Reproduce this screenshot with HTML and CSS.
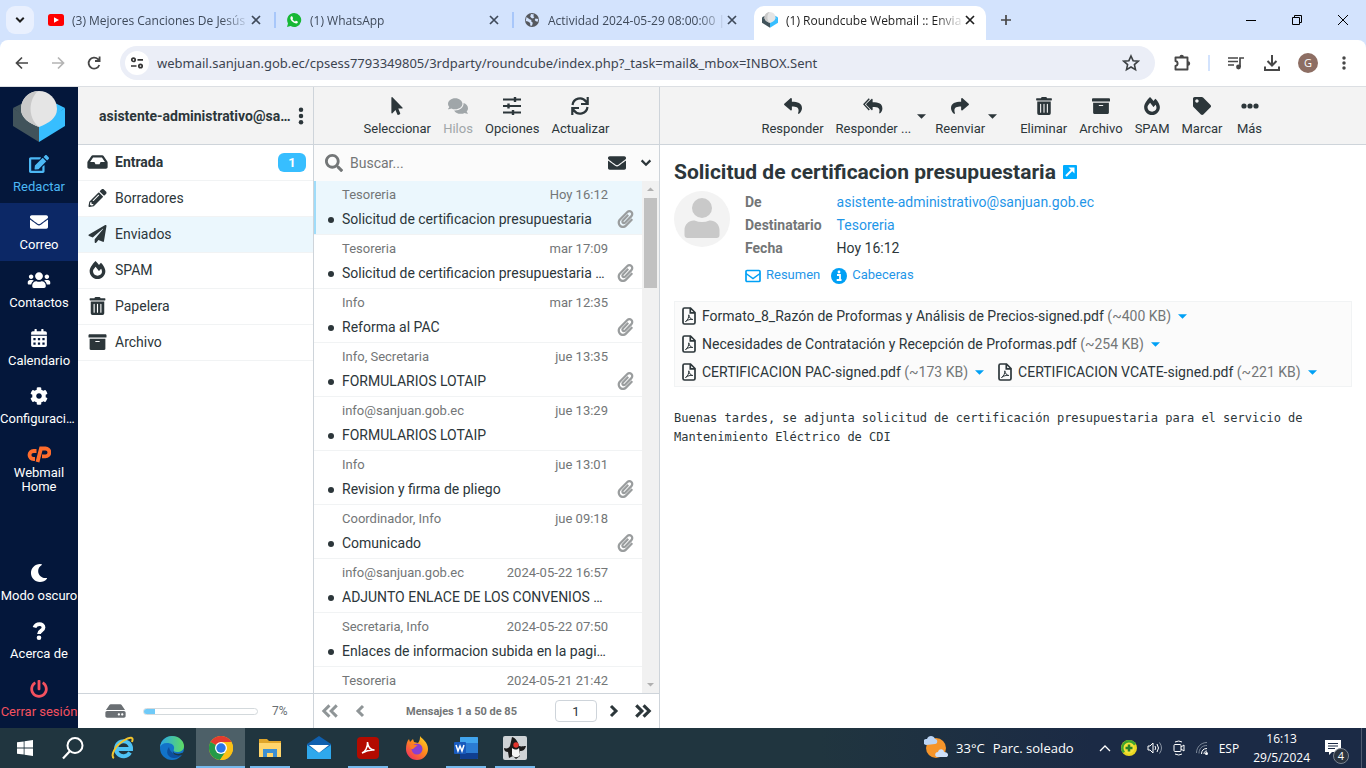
FILE: index.html
```html
<!DOCTYPE html>
<html lang="es">
  <head>
    <meta charset="utf-8">
    <title>(1) Roundcube Webmail :: Enviados</title>
    <link rel="stylesheet" href="styles.css">
  </head>
  <body>
    <svg class="sprite" aria-hidden="true">
      <symbol id="cube" viewBox="0 0 52 52">
        <path fill="#41535b" d="M0 17v18l26 16V33z"/>
        <path fill="#37beff" d="M52 17v18L26 51V33z"/>
        <path fill="#41535b" d="M0 17l10-5 16 24z"/>
        <path fill="#37beff" d="M52 17l-10-5-16 24z"/>
        <path fill="#e5e5e5" d="M26 0a18 18 0 0 1 18 18c0 9-8 14-18 18C16 32 8 27 8 18A18 18 0 0 1 26 0z"/>
        <path fill="#c9c9c9" d="M25 0C13 1 8 10 8 18c0 9 8 14 18 18-12-10-10-28-1-36z"/>
      </symbol>
      <symbol id="chev-down" viewBox="0 0 16 16"><path d="M3 5l5 5 5-5" fill="none" stroke="currentColor" stroke-width="2.6"/></symbol>
      <symbol id="close" viewBox="0 0 16 16"><path d="M4 4l8 8M12 4l-8 8" fill="none" stroke="currentColor" stroke-width="1.7"/></symbol>
      <symbol id="caret" viewBox="0 0 10 6"><path d="M0 1h10L5 6z" fill="currentColor"/></symbol>
      <symbol id="youtube" viewBox="0 0 16 16"><rect y="2" width="16" height="12" rx="2.5" fill="#f00"/><path d="M6 5.200l5 2.800-5 2.800z" fill="#fff"/></symbol>
      <symbol id="whatsapp" viewBox="0 0 16 16"><path d="M8 1a7 7 0 1 1-3.400 13L1 15l1-3.600A7 7 0 0 1 8 1z" fill="#17b835"/><path d="M5.300 4.200c-1.800 1.300-.6 4 1.300 5.600 2 1.700 4.300 2.500 5.200.8.400-.8.100-1-1.700-1.800-.7-.2-.7 1-1.400.7C7.700 9 6.900 8.200 6.500 7.300c-.1-.5.700-.6.500-1.300-.6-1.600-.7-2-1.700-1.800z" fill="#fff"/></symbol>
      <symbol id="globe" viewBox="0 0 16 16"><circle cx="8" cy="8" r="7" fill="#55585e"/><path d="M2.500 5l3 2.300 1.800.7v1.600l1.500 1.200-.8 3-1.800-.3V11L4 9.500 1.800 9zM7 2l3 .6-.8 1.700L10.500 5 9 6.500 7.500 6 6.200 4.600zM11.500 6.500l2.700.6-.5 2.600-1.800-.4-1.200-1.300z" fill="#d3e3fd"/></symbol>
      <symbol id="back" viewBox="0 0 16 16"><path d="M14 8H3M8 2.500L2.500 8 8 13.500" fill="none" stroke="currentColor" stroke-width="1.700"/></symbol>
      <symbol id="forward" viewBox="0 0 16 16"><path d="M2 8h11M8 2.500L13.500 8 8 13.500" fill="none" stroke="currentColor" stroke-width="1.700"/></symbol>
      <symbol id="reload" viewBox="0 0 16 16"><path d="M13.300 10A5.500 5.500 0 1 1 12 4.200L13.500 6M13.600 1.500V6H9" fill="none" stroke="currentColor" stroke-width="1.800"/></symbol>
      <symbol id="tune" viewBox="0 0 16 16"><g fill="none" stroke="#333" stroke-width="1.700"><circle cx="4.500" cy="4.800" r="1.700"/><path d="M8.500 4.800H14M2 11h5.500"/><circle cx="11.500" cy="11" r="1.700"/></g></symbol>
      <symbol id="star" viewBox="0 0 18 18"><path d="M9 2l2.100 4.700 5.100.5-3.800 3.400 1.100 5L9 13l-4.500 2.600 1.100-5L1.800 7.200l5.100-.5z" fill="none" stroke="#3c4043" stroke-width="1.600"/></symbol>
      <symbol id="puzzle" viewBox="0 0 18 18"><path d="M2.500 3.500h12v12h-12V12c2.800-.5 2.800-4.500 0-5z" fill="none" stroke="#474747" stroke-width="1.900" stroke-linejoin="round"/><path d="M6.500 3a2.200 2.200 0 0 1 4.400 0zM15 7.300a2.200 2.200 0 0 1 0 4.400z" fill="#474747"/></symbol>
      <symbol id="playlist" viewBox="0 0 18 18"><g fill="none" stroke="#474747" stroke-width="1.700"><path d="M1 4h10M1 7.500h10M1 11h6M13 13V4h4"/></g><circle cx="11.500" cy="13" r="2.400" fill="#474747"/></symbol>
      <symbol id="download" viewBox="0 0 18 18"><path d="M9 1v10M4.500 7L9 11.500 13.500 7M2 12.500V16h14v-3.500" fill="none" stroke="#474747" stroke-width="2"/></symbol>
      <symbol id="dots-v" viewBox="0 0 6 20"><circle cx="3" cy="3" r="2.500"/><circle cx="3" cy="10" r="2.500"/><circle cx="3" cy="17" r="2.500"/></symbol>
      <symbol id="dots-h" viewBox="0 0 18 18"><circle cx="3" cy="9" r="2.600"/><circle cx="9" cy="9" r="2.600"/><circle cx="15" cy="9" r="2.600"/></symbol>
      <symbol id="edit" viewBox="0 0 576 512"><path d="M402.600 83.200l90.200 90.200c3.800 3.800 3.800 10 0 13.800L274.400 405.600l-92.800 10.300c-12.400 1.400-22.900-9.100-21.500-21.500l10.300-92.800L388.800 83.200c3.800-3.800 10-3.800 13.800 0zm162-22.900l-48.800-48.800c-15.200-15.200-39.900-15.200-55.200 0l-35.400 35.400c-3.800 3.800-3.800 10 0 13.800l90.200 90.200c3.800 3.800 10 3.800 13.800 0l35.400-35.400c15.200-15.300 15.200-40 0-55.200zM384 346.200V448H64V128h229.800c3.200 0 6.200-1.300 8.500-3.500l40-40c7.600-7.600 2.200-20.500-8.500-20.500H48C21.500 64 0 85.500 0 112v352c0 26.500 21.500 48 48 48h352c26.500 0 48-21.500 48-48V306.200c0-10.700-12.900-16-20.500-8.500l-40 40c-2.200 2.300-3.500 5.300-3.500 8.500z"/></symbol>
      <symbol id="envelope" viewBox="0 0 512 512"><path d="M502.300 190.800c3.900-3.100 9.700-.2 9.700 4.700V400c0 26.500-21.500 48-48 48H48c-26.500 0-48-21.500-48-48V195.600c0-5 5.700-7.800 9.700-4.700 22.400 17.400 52.100 39.500 154.100 113.600 21.100 15.400 56.700 47.800 92.200 47.600 35.700.3 72-32.800 92.300-47.600 102-74.100 131.600-96.300 154-113.700zM256 320c23.200.4 56.600-29.200 73.400-41.400 132.700-96.300 142.800-104.700 173.400-128.700 5.800-4.500 9.200-11.500 9.200-18.900v-19c0-26.500-21.500-48-48-48H48c-26.500 0-48 21.500-48 48v19c0 7.400 3.400 14.300 9.200 18.900 30.600 23.900 40.700 32.400 173.400 128.700 16.800 12.200 50.200 41.800 73.400 41.400z"/></symbol>
      <symbol id="users" viewBox="0 0 640 512"><path d="M96 224c35.300 0 64-28.700 64-64s-28.700-64-64-64-64 28.700-64 64 28.700 64 64 64zm448 0c35.300 0 64-28.700 64-64s-28.700-64-64-64-64 28.700-64 64 28.700 64 64 64zm32 32h-64c-17.600 0-33.500 7.100-45.100 18.600 40.300 22.100 68.900 62 75.100 109.400h66c17.700 0 32-14.300 32-32v-32c0-35.300-28.700-64-64-64zm-256 0c61.900 0 112-50.100 112-112S381.900 32 320 32 208 82.100 208 144s50.100 112 112 112zm76.800 32h-8.300c-20.800 10-43.900 16-68.500 16s-47.600-6-68.500-16h-8.300C179.600 288 128 339.600 128 403.200V432c0 26.500 21.500 48 48 48h288c26.500 0 48-21.500 48-48v-28.800c0-63.600-51.600-115.200-115.200-115.200zm-223.700-13.400C161.500 263.100 145.600 256 128 256H64c-35.300 0-64 28.700-64 64v32c0 17.700 14.300 32 32 32h65.900c6.300-47.400 34.900-87.300 75.200-109.400z"/></symbol>
      <symbol id="calendar" viewBox="0 0 448 512"><path fill-rule="evenodd" d="M0 464c0 26.500 21.500 48 48 48h352c26.500 0 48-21.500 48-48V192H0zM64 256h64v64H64zm128 0h64v64h-64zm128 0h64v64h-64zM64 384h64v64H64zm128 0h64v64h-64zm128 0h64v64h-64zM400 64h-48V16c0-8.800-7.200-16-16-16h-32c-8.800 0-16 7.200-16 16v48H160V16c0-8.800-7.200-16-16-16h-32c-8.800 0-16 7.200-16 16v48H48C21.500 64 0 85.500 0 112v48h448v-48c0-26.500-21.500-48-48-48z"/></symbol>
      <symbol id="cog" viewBox="0 0 512 512"><path d="M487.400 315.700l-42.600-24.600c4.300-23.200 4.300-47 0-70.200l42.600-24.600c4.900-2.800 7.100-8.600 5.500-14-11.100-35.600-30-67.800-54.700-94.600-3.800-4.100-10-5.100-14.800-2.300L380.800 110c-17.900-15.400-38.500-27.300-60.800-35.100V25.800c0-5.600-3.900-10.500-9.400-11.700-36.700-8.200-74.300-7.800-109.200 0-5.500 1.200-9.400 6.100-9.400 11.700V75c-22.200 7.900-42.800 19.800-60.800 35.100L88.700 85.500c-4.900-2.800-11-1.900-14.800 2.300-24.700 26.700-43.600 58.900-54.700 94.600-1.700 5.400.6 11.200 5.500 14L67.300 221c-4.300 23.200-4.300 47 0 70.200l-42.600 24.600c-4.900 2.800-7.100 8.600-5.500 14 11.100 35.600 30 67.800 54.700 94.600 3.800 4.100 10 5.100 14.800 2.300l42.600-24.600c17.900 15.400 38.500 27.300 60.800 35.100v49.200c0 5.600 3.900 10.500 9.400 11.700 36.700 8.200 74.300 7.800 109.200 0 5.500-1.200 9.400-6.100 9.400-11.700v-49.200c22.200-7.900 42.800-19.800 60.800-35.100l42.600 24.600c4.900 2.800 11 1.900 14.800-2.300 24.700-26.700 43.600-58.900 54.700-94.600 1.500-5.500-.7-11.300-5.600-14.100zM256 336c-44.100 0-80-35.900-80-80s35.900-80 80-80 80 35.900 80 80-35.900 80-80 80z"/></symbol>
      <symbol id="cpanel" viewBox="0 0 24 16"><g fill="none" stroke="#ff6c2c" stroke-width="3.800"><path d="M9.500 5H6.500a4 4 0 0 0 0 8H8"/><path d="M10.500 16L14 2.500h4.500a3.700 3.700 0 0 1 0 7.800H15"/></g></symbol>
      <symbol id="moon" viewBox="0 0 512 512"><path d="M283.200 512c79 0 151.100-35.900 198.900-94.800 7-8.700-.7-21.400-11.600-19.300-124.200 23.600-238.300-71.600-238.300-197 0-72.200 38.700-138.600 101.500-174.400 9.700-5.500 7.300-20.200-3.700-22.200A258 258 0 0 0 283.200 0c-141.300 0-256 114.500-256 256 0 141.300 114.500 256 256 256z"/></symbol>
      <symbol id="help" viewBox="0 0 18 18"><path d="M4.500 5.500C6 1 13.500 1 13.500 5.500c0 3.400-4.500 2.800-4.500 6.500" fill="none" stroke="currentColor" stroke-width="3.800"/><circle cx="9" cy="15.700" r="2.300"/></symbol>
      <symbol id="power" viewBox="0 0 512 512"><path d="M400 54.100c63 45 104 118.600 104 201.900 0 136.800-110.800 247.700-247.500 248C120 504.300 8.200 393 8 256.400 7.900 173.100 48.900 99.300 111.800 54.200c11.700-8.300 28-4.800 35 7.700L162.600 90c5.900 10.500 3.100 23.800-6.600 31-41.500 30.800-68 79.600-68 134.900-.1 92.300 74.500 168.100 168 168.100 91.600 0 168.600-74.200 168-169.100-.3-51.800-24.700-101.800-68.100-134-9.700-7.200-12.400-20.500-6.500-30.900l15.800-28.100c7-12.400 23.200-16.100 34.800-7.800zM296 264V24c0-13.300-10.700-24-24-24h-32c-13.300 0-24 10.700-24 24v240c0 13.300 10.700 24 24 24h32c13.300 0 24-10.700 24-24z"/></symbol>
      <symbol id="inbox" viewBox="0 0 576 512"><path d="M567.900 243.900L462.300 85.400A48 48 0 0 0 422.300 64H153.700a48 48 0 0 0-39.900 21.400L8.100 243.900A48 48 0 0 0 0 270.500V400c0 26.500 21.500 48 48 48h480c26.500 0 48-21.500 48-48V270.500a48 48 0 0 0-8.100-26.600zM162.300 128h251.400l85.400 128H376l-32 64H232l-32-64H76.900z"/></symbol>
      <symbol id="pencil" viewBox="0 0 512 512"><path d="M497.900 142.100l-46.100 46.100c-4.700 4.700-12.300 4.700-17 0l-111-111c-4.700-4.700-4.700-12.300 0-17l46.100-46.100c18.700-18.700 49.100-18.700 67.900 0l60.100 60.100c18.800 18.700 18.800 49.100 0 67.900zM284.200 99.800L21.600 362.400.4 483.900c-2.900 16.400 11.400 30.600 27.800 27.800l121.500-21.300 262.600-262.600c4.700-4.700 4.700-12.300 0-17l-111-111c-4.800-4.700-12.400-4.700-17.100 0zM124.100 339.900c-5.500-5.500-5.500-14.300 0-19.800l154-154c5.500-5.500 14.300-5.500 19.800 0s5.500 14.300 0 19.800l-154 154c-5.500 5.500-14.300 5.500-19.800 0zM88 424h48v36.300l-64.500 11.300-31.100-31.100L51.700 376H88v48z"/></symbol>
      <symbol id="plane" viewBox="0 0 512 512"><path d="M476 3.200L12.500 270.600c-18.100 10.400-15.800 35.600 2.200 43.200L121 358.400l287.300-253.200c5.500-4.900 13.300 2.600 8.600 8.300L176 407v80.500c0 23.600 28.500 32.900 42.500 15.800L282 426l124.600 52.200c14.200 6 30.400-2.900 33-18.200l72-432C515 7.800 493.300-6.800 476 3.200z"/></symbol>
      <symbol id="fire" viewBox="0 0 448 512"><path d="M323.600 51.200c-20.800 19.300-39.600 39.600-56.300 60C240.100 73.600 206.300 35.500 168 0 69.700 91.200 0 210 0 281.600 0 408.900 100.300 512 224 512s224-103.100 224-230.400c0-53.300-52-163.100-124.400-230.400zm-19.500 340.700C282.400 407 255.700 416 226.900 416 154.700 416 96 368.300 96 290.800c0-38.600 24.300-72.700 72.800-130.800 6.900 8 98.800 125.300 98.800 125.300l58.700-66.800c4.100 6.800 7.900 13.500 11.200 20 27.400 52.100 15.800 118.900-33.400 153.400z"/></symbol>
      <symbol id="trash" viewBox="0 0 448 512"><path d="M32 464a48 48 0 0 0 48 48h288a48 48 0 0 0 48-48V128H32zm272-256a16 16 0 0 1 32 0v224a16 16 0 0 1-32 0zm-96 0a16 16 0 0 1 32 0v224a16 16 0 0 1-32 0zm-96 0a16 16 0 0 1 32 0v224a16 16 0 0 1-32 0zM432 32H312l-9.400-18.700A24 24 0 0 0 281.100 0H166.800a23.700 23.700 0 0 0-21.400 13.300L136 32H16A16 16 0 0 0 0 48v32a16 16 0 0 0 16 16h416a16 16 0 0 0 16-16V48a16 16 0 0 0-16-16z"/></symbol>
      <symbol id="archive" viewBox="0 0 512 512"><path d="M32 448c0 17.700 14.300 32 32 32h384c17.700 0 32-14.300 32-32V160H32v288zm160-212c0-6.600 5.400-12 12-12h104c6.600 0 12 5.400 12 12v8c0 6.600-5.400 12-12 12H204c-6.600 0-12-5.400-12-12v-8zM480 32H32C14.300 32 0 46.300 0 64v48c0 8.800 7.200 16 16 16h480c8.800 0 16-7.200 16-16V64c0-17.700-14.300-32-32-32z"/></symbol>
      <symbol id="hdd" viewBox="0 0 576 512"><path d="M576 304v96c0 26.500-21.500 48-48 48H48c-26.500 0-48-21.500-48-48v-96c0-26.500 21.500-48 48-48h480c26.500 0 48 21.500 48 48zm-48-80a80 80 0 0 1 30.800 6.200L462.300 85.400A48 48 0 0 0 422.300 64H153.700a48 48 0 0 0-39.900 21.400L17.200 230.200A80 80 0 0 1 48 224h480zm-48 96c-17.700 0-32 14.300-32 32s14.300 32 32 32 32-14.300 32-32-14.300-32-32-32zm-96 0c-17.700 0-32 14.300-32 32s14.300 32 32 32 32-14.300 32-32-14.300-32-32-32z"/></symbol>
      <symbol id="pointer" viewBox="0 0 320 512"><path d="M302.200 329.100H196.100l55.800 136c3.900 9.400-.5 20-9.400 24l-49.200 21.400c-9.100 4-19.400-.5-23.300-9.700l-53-129.100-86.700 89.100C18.700 472.700 0 463.600 0 448V18.300C0 1.900 19.900-6.100 30.300 5.400L314.700 298c11.500 11.200 3 31.100-12.500 31.100z"/></symbol>
      <symbol id="comments" viewBox="0 0 576 512"><path d="M416 192c0-88.400-93.100-160-208-160S0 103.600 0 192c0 34.300 14.100 65.900 38 92-13.400 30.200-35.500 54.200-35.800 54.500-2.200 2.300-2.800 5.700-1.500 8.700S4.800 352 8 352c36.600 0 66.900-12.300 88.700-25 32.200 15.700 70.300 25 111.300 25 114.900 0 208-71.600 208-160zm122 220c23.900-26 38-57.700 38-92 0-66.900-53.500-124.200-129.300-148.100.9 6.600 1.300 13.300 1.300 20.100 0 105.900-107.700 192-240 192-10.800 0-21.300-.8-31.700-1.900C207.800 439.600 281.800 480 368 480c41 0 79.100-9.200 111.300-25 21.800 12.700 52.100 25 88.700 25 3.200 0 6.100-1.900 7.300-4.800 1.300-2.900.7-6.300-1.500-8.700-.3-.3-22.400-24.200-35.800-54.500z"/></symbol>
      <symbol id="sliders" viewBox="0 0 18 18"><path d="M0 2.500h18M0 9h18M0 15.500h18" stroke="currentColor" stroke-width="1.800"/><path d="M12 0v5M5.500 6.500v5M10 13v5" stroke="currentColor" stroke-width="2.400"/></symbol>
      <symbol id="sync" viewBox="0 0 18 18"><path d="M1.500 8A7.500 7.500 0 0 1 15 4.500L16.500 7M16.500 10A7.500 7.500 0 0 1 3 13.500L1.500 11M16.700 0v7H10M1.300 18v-7H8" fill="none" stroke="currentColor" stroke-width="2.200"/></symbol>
      <symbol id="reply" viewBox="0 0 512 512"><path d="M8.300 189.800L184.300 37.900C199.700 24.500 224 35.300 224 56v80.100c160.600 1.800 288 34 288 186.200 0 61.500-39.600 122.300-83.300 154.200-13.700 9.900-33.100-2.600-28.100-18.700 45.300-145-21.500-183.500-176.600-185.700V360c0 20.700-24.300 31.500-39.700 18.200l-176-152c-11.100-9.600-11.100-26.800 0-36.400z"/></symbol>
      <symbol id="reply-all" viewBox="0 0 590 512"><path d="M100 189.800L250 50c14-13 34-4 34 14v80c180 2 288 34 288 186 0 61-30 112-70 142-13 9-28-2-24-18 35-140-21-170-194-172v78c0 20-20 28-34 16L100 226c-11-10-11-26 0-36.200z"/><path d="M185 40L30 208l155 168" fill="none" stroke="currentColor" stroke-width="42"/></symbol>
      <symbol id="fwd" viewBox="0 0 512 512"><path transform="matrix(-1 0 0 1 512 0)" d="M8.300 189.800L184.300 37.900C199.700 24.500 224 35.300 224 56v80.100c160.600 1.800 288 34 288 186.200 0 61.500-39.600 122.300-83.300 154.200-13.700 9.900-33.100-2.600-28.100-18.700 45.300-145-21.500-183.500-176.600-185.700V360c0 20.700-24.300 31.500-39.700 18.200l-176-152c-11.100-9.600-11.100-26.800 0-36.400z"/></symbol>
      <symbol id="tag" viewBox="0 0 512 512"><path d="M0 252.100V48C0 21.500 21.500 0 48 0h204.100a48 48 0 0 1 34 14.100l211.800 211.800c18.800 18.800 18.800 49.200 0 67.900L293.800 497.900c-18.700 18.800-49.100 18.800-67.900 0L14.100 286.100A48 48 0 0 1 0 252.100zM112 64c-26.500 0-48 21.500-48 48s21.500 48 48 48 48-21.500 48-48-21.500-48-48-48z"/></symbol>
      <symbol id="search" viewBox="0 0 512 512"><path d="M505 442.700L405.300 343c-4.500-4.500-10.600-7-17-7H372c27.600-35.300 44-79.700 44-128C416 93.100 322.900 0 208 0S0 93.100 0 208s93.100 208 208 208c48.300 0 92.700-16.400 128-44v16.300c0 6.400 2.500 12.500 7 17l99.700 99.700c9.400 9.400 24.600 9.400 33.900 0l28.300-28.300c9.400-9.400 9.400-24.600.1-34zM208 336c-70.700 0-128-57.200-128-128 0-70.700 57.200-128 128-128 70.700 0 128 57.200 128 128 0 70.700-57.200 128-128 128z"/></symbol>
      <symbol id="clip" viewBox="0 0 448 512"><path d="M43.200 466.100c-58.400-60.200-57.300-157.500 1.400-217.500L254.400 34c44.300-45.300 116.400-45.300 160.700 0 43.900 44.900 43.900 117.300 0 162.300L232.200 383.100c-29.900 30.600-78.600 30.100-108-1-28.200-29.900-27.300-77.400 1.500-106.900l143.700-146.900c6.200-6.300 16.300-6.400 22.700-.2l22.800 22.400c6.300 6.200 6.400 16.300.3 22.600L171.400 319.900c-4.900 5.100-5.200 13.400-.6 18.300 4.400 4.600 11.200 4.700 15.700.2l182.800-186.900c19.600-20.100 19.600-52.700 0-72.800-19.200-19.600-50-19.600-69.200 0L90.400 293.300c-34.800 35.600-35.300 93.100-1.200 128.300 34 35.100 89 35.100 123.100.3l172-176c6.200-6.300 16.300-6.400 22.600-.3l22.900 22.400c6.300 6.200 6.400 16.300.3 22.600L258 466.600c-59.600 60.900-156 60.200-214.800-.5z"/></symbol>
      <symbol id="pdf" viewBox="0 0 14 18"><path d="M1 2.500V15.500Q1 17 2.500 17h9Q13 17 13 15.500V5.500L8.500 1h-6Q1 1 1 2.500zM8.300 1v4.800H13" fill="none" stroke="#2c363a" stroke-width="1.700"/><path d="M3.500 14.500c2-1.200 3.600-4 3.300-6.700.5 3 1.800 4.200 4 4.700-2.500-.5-5 .3-7.300 2z" fill="none" stroke="#2c363a"/></symbol>
      <symbol id="mail-o" viewBox="0 0 16 14"><rect x="1" y="1.500" width="14" height="11" rx="1" fill="none" stroke="currentColor" stroke-width="1.700"/><path d="M1 4.500l7 5 7-5" fill="none" stroke="currentColor" stroke-width="1.500"/></symbol>
      <symbol id="info" viewBox="0 0 16 16"><circle cx="8" cy="8" r="8"/><path d="M6 7h3v5M5.700 12h4.800" fill="none" stroke="#fff" stroke-width="1.800"/><circle cx="8" cy="4" r="1.400" fill="#fff"/></symbol>
      <symbol id="popout" viewBox="0 0 14 14"><rect width="14" height="14" rx="1" fill="#00acff"/><path d="M3 11l7-7" stroke="#fff" stroke-width="2"/><path d="M5.500 2.500H11.500V8.500z" fill="#fff"/></symbol>
      <symbol id="left1" viewBox="0 0 16 16"><path d="M11 3L6 8l5 5" fill="none" stroke="currentColor" stroke-width="3"/></symbol>
      <symbol id="left2" viewBox="0 0 16 16"><path d="M7.500 3l-5 5 5 5M14 3L9 8l5 5" fill="none" stroke="currentColor" stroke-width="2.600"/></symbol>
      <symbol id="right1" viewBox="0 0 16 16"><path d="M5 3l5 5-5 5" fill="none" stroke="currentColor" stroke-width="3"/></symbol>
      <symbol id="right2" viewBox="0 0 16 16"><path d="M2 3l5 5-5 5M8.500 3l5 5-5 5" fill="none" stroke="currentColor" stroke-width="2.800"/></symbol>
    </svg>

    <header class="browser">
      <div class="tabs">
        <button class="tab-search" aria-label="Buscar pestañas"><svg class="i12"><use href="#chev-down"/></svg></button>
        <div class="tab"><svg class="i16"><use href="#youtube"/></svg><span class="tab-title">(3) Mejores Canciones De Jesús</span><button class="tab-x" aria-label="Cerrar"><svg class="i16"><use href="#close"/></svg></button></div>
        <div class="tab"><svg class="i16"><use href="#whatsapp"/></svg><span class="tab-title">(1) WhatsApp</span><button class="tab-x" aria-label="Cerrar"><svg class="i16"><use href="#close"/></svg></button></div>
        <div class="tab last"><svg class="i16"><use href="#globe"/></svg><span class="tab-title">Actividad 2024-05-29 08:00:00 |</span><button class="tab-x" aria-label="Cerrar"><svg class="i16"><use href="#close"/></svg></button></div>
        <div class="tab active"><svg class="i16"><use href="#cube"/></svg><span class="tab-title">(1) Roundcube Webmail :: Envia</span><button class="tab-x" aria-label="Cerrar"><svg class="i16"><use href="#close"/></svg></button></div>
        <button class="new-tab" aria-label="Nueva pestaña"><svg width="12" height="12"><path d="M6 1v10M1 6h10" stroke="#474747" stroke-width="1.700"/></svg></button>
        <div class="win-btns">
          <button aria-label="Minimizar"><svg width="10" height="10"><path d="M0 5.500h10" stroke="#000"/></svg></button>
          <button aria-label="Restaurar"><svg width="10" height="10"><path d="M.5 2.500h7v7h-7zM2.500 2V.5h7v7H8" fill="none" stroke="#000"/></svg></button>
          <button aria-label="Cerrar ventana"><svg width="10" height="10"><path d="M0 0l10 10M10 0L0 10" stroke="#000"/></svg></button>
        </div>
      </div>
      <div class="nav">
        <button class="nav-btn" aria-label="Atrás"><svg class="i16"><use href="#back"/></svg></button>
        <button class="nav-btn off" aria-label="Adelante"><svg class="i16"><use href="#forward"/></svg></button>
        <button class="nav-btn" aria-label="Recargar"><svg class="i16"><use href="#reload"/></svg></button>
        <div class="omnibox">
          <button class="site" aria-label="Información del sitio"><svg class="i16"><use href="#tune"/></svg></button>
          <input type="text" aria-label="Dirección" value="webmail.sanjuan.gob.ec/cpsess7793349805/3rdparty/roundcube/index.php?_task=mail&amp;_mbox=INBOX.Sent">
          <button class="fav" aria-label="Favorito"><svg class="i18"><use href="#star"/></svg></button>
        </div>
        <button class="nav-btn" aria-label="Extensiones"><svg class="i18"><use href="#puzzle"/></svg></button>
        <span class="nav-sep"></span>
        <button class="nav-btn" aria-label="Multimedia"><svg class="i18"><use href="#playlist"/></svg></button>
        <button class="nav-btn" aria-label="Descargas"><svg class="i18"><use href="#download"/></svg></button>
        <button class="nav-btn"><span class="profile">G</span></button>
        <button class="nav-btn" aria-label="Menú"><svg class="menu-dots"><use href="#dots-v"/></svg></button>
      </div>
    </header>

    <main class="webmail">
      <nav class="taskmenu">
        <svg class="logo"><use href="#cube"/></svg>
        <a class="compose" href="#"><svg class="ti"><use href="#edit"/></svg><span>Redactar</span></a>
        <a class="selected" href="#"><svg class="ti"><use href="#envelope"/></svg><span>Correo</span></a>
        <a href="#"><svg class="ti wide"><use href="#users"/></svg><span>Contactos</span></a>
        <a href="#"><svg class="ti"><use href="#calendar"/></svg><span>Calendario</span></a>
        <a href="#"><svg class="ti"><use href="#cog"/></svg><span>Configuración</span></a>
        <a class="home" href="#"><svg class="ti wide"><use href="#cpanel"/></svg><span>Webmail Home</span></a>
        <div class="spacer"></div>
        <a href="#"><svg class="ti"><use href="#moon"/></svg><span>Modo oscuro</span></a>
        <a href="#"><svg class="ti"><use href="#help"/></svg><span>Acerca de</span></a>
        <a class="logout" href="#"><svg class="ti"><use href="#power"/></svg><span>Cerrar sesión</span></a>
      </nav>

      <section class="folders">
        <div class="head account"><span class="user">asistente-administrativo@sanjuan.gob.ec</span><button aria-label="Opciones"><svg class="acc-dots"><use href="#dots-v"/></svg></button></div>
        <ul class="folder-list">
          <li class="unread"><svg class="fi"><use href="#inbox"/></svg><a href="#">Entrada</a><span class="badge">1</span></li>
          <li><svg class="fi"><use href="#pencil"/></svg><a href="#">Borradores</a></li>
          <li class="selected"><svg class="fi"><use href="#plane"/></svg><a href="#">Enviados</a></li>
          <li><svg class="fi"><use href="#fire"/></svg><a href="#">SPAM</a></li>
          <li><svg class="fi"><use href="#trash"/></svg><a href="#">Papelera</a></li>
          <li><svg class="fi"><use href="#archive"/></svg><a href="#">Archivo</a></li>
        </ul>
        <div class="foot quota"><svg class="disk"><use href="#hdd"/></svg><span class="bar"><span class="used" style="width: 10%"></span></span><span>7%</span></div>
      </section>

      <section class="messages">
        <div class="head toolbar">
          <button><svg class="i18"><use href="#pointer"/></svg>Seleccionar</button>
          <button class="off"><svg class="i20"><use href="#comments"/></svg>Hilos</button>
          <button><svg class="i18"><use href="#sliders"/></svg>Opciones</button>
          <button><svg class="i18"><use href="#sync"/></svg>Actualizar</button>
        </div>
        <div class="searchbar">
          <svg class="i18 mag"><use href="#search"/></svg>
          <input type="text" placeholder="Buscar..." aria-label="Buscar">
          <button aria-label="No leídos"><svg class="i18"><use href="#envelope"/></svg></button>
          <button aria-label="Filtros"><svg class="i14"><use href="#chev-down"/></svg></button>
        </div>
        <div class="list-wrap">
          <ul class="list">
            <li class="selected"><span class="from">Tesoreria</span><span class="date">Hoy 16:12</span><a class="subject" href="#">Solicitud de certificacion presupuestaria</a><svg class="clip"><use href="#clip"/></svg></li>
            <li><span class="from">Tesoreria</span><span class="date">mar 17:09</span><a class="subject" href="#">Solicitud de certificacion presupuestaria CDI</a><svg class="clip"><use href="#clip"/></svg></li>
            <li><span class="from">Info</span><span class="date">mar 12:35</span><a class="subject" href="#">Reforma al PAC</a><svg class="clip"><use href="#clip"/></svg></li>
            <li><span class="from">Info, Secretaria</span><span class="date">jue 13:35</span><a class="subject" href="#">FORMULARIOS LOTAIP</a><svg class="clip"><use href="#clip"/></svg></li>
            <li><span class="from">info@sanjuan.gob.ec</span><span class="date">jue 13:29</span><a class="subject" href="#">FORMULARIOS LOTAIP</a></li>
            <li><span class="from">Info</span><span class="date">jue 13:01</span><a class="subject" href="#">Revision y firma de pliego</a><svg class="clip"><use href="#clip"/></svg></li>
            <li><span class="from">Coordinador, Info</span><span class="date">jue 09:18</span><a class="subject" href="#">Comunicado</a><svg class="clip"><use href="#clip"/></svg></li>
            <li><span class="from">info@sanjuan.gob.ec</span><span class="date">2024-05-22 16:57</span><a class="subject" href="#">ADJUNTO ENLACE DE LOS CONVENIOS 2024</a></li>
            <li><span class="from">Secretaria, Info</span><span class="date">2024-05-22 07:50</span><a class="subject" href="#">Enlaces de informacion subida en la pagina web</a></li>
            <li><span class="from">Tesoreria</span><span class="date">2024-05-21 21:42</span></li>
          </ul>
          <div class="scroll"><svg><use href="#caret"/></svg><span class="thumb"></span><svg class="down"><use href="#caret"/></svg></div>
        </div>
        <div class="foot pager">
          <button class="off" aria-label="Primera"><svg class="i18"><use href="#left2"/></svg></button>
          <button class="off" aria-label="Anterior"><svg class="i16"><use href="#left1"/></svg></button>
          <span class="count">Mensajes 1 a 50 de 85</span>
          <input type="text" value="1" aria-label="Página">
          <button aria-label="Siguiente"><svg class="i16"><use href="#right1"/></svg></button>
          <button aria-label="Última"><svg class="i18"><use href="#right2"/></svg></button>
        </div>
      </section>

      <section class="content">
        <div class="head toolbar">
          <button><svg class="i18"><use href="#reply"/></svg>Responder</button>
          <button class="all"><svg class="i20"><use href="#reply-all"/></svg>Responder ...</button>
          <button class="drop" aria-label="Opciones de respuesta"><svg><use href="#caret"/></svg></button>
          <button><svg class="i18"><use href="#fwd"/></svg>Reenviar</button>
          <button class="drop" aria-label="Opciones de reenvío"><svg><use href="#caret"/></svg></button>
          <button class="group"><svg class="i18"><use href="#trash"/></svg>Eliminar</button>
          <button><svg class="i18"><use href="#archive"/></svg>Archivo</button>
          <button><svg class="i18"><use href="#fire"/></svg>SPAM</button>
          <button><svg class="i18"><use href="#tag"/></svg>Marcar</button>
          <button><svg class="i18"><use href="#dots-h"/></svg>Más</button>
        </div>
        <article class="message">
          <h2>Solicitud de certificacion presupuestaria <a href="#" aria-label="Abrir en ventana nueva"><svg class="i14"><use href="#popout"/></svg></a></h2>
          <div class="msg-head">
            <svg class="photo" viewBox="0 0 56 56"><circle cx="28" cy="28" r="28" fill="#f3f3f3"/><circle cx="28" cy="17" r="10" fill="#c9c9c9"/><path d="M10.500 44V39c0-6 5-10 10-9.500 5 2 10 2 15 0 5-.5 10 3.500 10 9.500v5q0 3-3 3h-29q-3 0-3-3z" fill="#c9c9c9"/></svg>
            <div>
              <table class="headers">
                <tr><th>De</th><td><a href="#">asistente-administrativo@sanjuan.gob.ec</a></td></tr>
                <tr><th>Destinatario</th><td><a href="#">Tesoreria</a></td></tr>
                <tr><th>Fecha</th><td>Hoy 16:12</td></tr>
              </table>
              <div class="msg-links"><a href="#"><svg class="i16"><use href="#mail-o"/></svg>Resumen</a><a href="#"><svg class="i16"><use href="#info"/></svg>Cabeceras</a></div>
            </div>
          </div>
          <ul class="attachments">
            <li><svg class="pdf"><use href="#pdf"/></svg><a href="#">Formato_8_Razón de Proformas y Análisis de Precios-signed.pdf <span>(~400 KB)</span></a><button aria-label="Opciones"><svg><use href="#caret"/></svg></button></li>
            <li><svg class="pdf"><use href="#pdf"/></svg><a href="#">Necesidades de Contratación y Recepción de Proformas.pdf <span>(~254 KB)</span></a><button aria-label="Opciones"><svg><use href="#caret"/></svg></button></li>
            <li><svg class="pdf"><use href="#pdf"/></svg><a href="#">CERTIFICACION PAC-signed.pdf <span>(~173 KB)</span></a><button aria-label="Opciones"><svg><use href="#caret"/></svg></button></li>
            <li><svg class="pdf"><use href="#pdf"/></svg><a href="#">CERTIFICACION VCATE-signed.pdf <span>(~221 KB)</span></a><button aria-label="Opciones"><svg><use href="#caret"/></svg></button></li>
          </ul>
          <p class="body-text">Buenas tardes, se adjunta solicitud de certificación presupuestaria para el servicio de<br>Mantenimiento Eléctrico de CDI</p>
        </article>
      </section>
    </main>

    <footer class="taskbar">
      <button aria-label="Inicio"><svg class="i16" viewBox="0 0 16 16"><path d="M0 2.300l6.700-.9v6.200H0zM7.500 1.300L16 0v7.600H7.500zM0 8.400h6.700v6.200L0 13.700zM7.500 8.400H16V16l-8.500-1.200z" fill="#fff"/></svg></button>
      <button aria-label="Buscar"><svg width="24" height="24"><circle cx="13" cy="9.500" r="7.500" fill="none" stroke="#fff" stroke-width="2"/><path d="M8 15l-7 7.500" stroke="#fff" stroke-width="2.200"/></svg></button>
      <button aria-label="Internet Explorer"><svg width="24" height="24" viewBox="0 0 24 24"><path d="M19 16.500A7.500 7.500 0 1 1 20 13H6" fill="none" stroke="#4fc3f4" stroke-width="4"/><path d="M3 22C-1 20 4 10 12 5s11-4 9 1" fill="none" stroke="#f3c52c" stroke-width="2"/></svg></button>
      <button aria-label="Edge"><svg width="24" height="24" viewBox="0 0 24 24"><defs><linearGradient id="eg" x1="0" x2="1"><stop offset="0" stop-color="#2aa8e8"/><stop offset="1" stop-color="#5fdb62"/></linearGradient></defs><circle cx="12" cy="12" r="12" fill="#1273c9"/><path d="M0 11C1 4 6 0 12 0c7 0 12 5 12 10 0 4-3 6-7 6-3 0-4-1-3-3 1-4-3-6-7-6-4 0-6 2-7 4z" fill="url(#eg)"/><path d="M9 11c-4 5-1 11 5 11 4 0 7-2 8-4-6 2-12-1-13-7z" fill="#0d4f9e"/><path d="M13 15c0 3 6 4 11 1v2c-5 3-12 1-11-3z" fill="#203640"/></svg></button>
      <button class="current" aria-label="Chrome"><svg width="24" height="24" viewBox="0 0 24 24"><circle cx="12" cy="12" r="12" fill="#fbc116"/><path d="M12 12L1.600 6A12 12 0 0 1 22.400 6z" fill="#e33b2e"/><path d="M1.600 6A12 12 0 0 0 11 24l6-9-5-3z" fill="#249a48"/><path d="M12 6h10.400A12 12 0 0 1 11 24l6.200-9z" fill="#fbc116"/><circle cx="12" cy="12" r="6" fill="#fff"/><circle cx="12" cy="12" r="4.700" fill="#2a76e8"/></svg></button>
      <button class="open" aria-label="Explorador"><svg width="22" height="20" viewBox="0 0 22 20"><path d="M0 1h8l2 2h12v16H0z" fill="#e0a52a"/><path d="M0 5h22v14H0z" fill="#ffd56c"/><path d="M4 11h14v8h-4v-4H8v4H4z" fill="#3c8fd3"/></svg></button>
      <button aria-label="Correo"><svg width="24" height="24" viewBox="0 0 24 24"><path d="M0 8l12-8 12 8v15H0z" fill="#0f5fae"/><path d="M2 9h20L12 17z" fill="#f4f4f4"/><path d="M0 9l12 8 12-8v14H0z" fill="#2fa8ec"/><path d="M3 9h18l-9 7z" fill="#fff"/></svg></button>
      <button class="open" aria-label="Acrobat"><svg width="22" height="22" viewBox="0 0 22 22"><rect width="22" height="22" rx="4" fill="#b30b00"/><path d="M5 16c3-1 6-6 5.500-11 .5 5 3 8 7 8-4-.5-8 .5-12.500 3z" fill="none" stroke="#fff" stroke-width="1.500"/></svg></button>
      <button aria-label="Firefox"><svg width="24" height="24" viewBox="0 0 24 24"><defs><linearGradient id="ff" x1="1" y1="0" x2=".2" y2="1"><stop offset="0" stop-color="#ffe226"/><stop offset=".5" stop-color="#ff8a1c"/><stop offset="1" stop-color="#f0305f"/></linearGradient></defs><path d="M15 0c2 3 8 6 8 13A11 11 0 0 1 1 13c0-4 1-8 3-10l1 3 3-3 1 3 4 1c2-2 2-5 2-7z" fill="url(#ff)"/><circle cx="12" cy="13" r="5.500" fill="#8a3fd0"/><path d="M5 9c4 0 5-1 8 1-3 0-3 2-5 3-3 0-3-2-3-4z" fill="#ff7b24"/></svg></button>
      <button class="open" aria-label="Word"><svg width="24" height="22" viewBox="0 0 24 22"><rect x="6" width="18" height="22" rx="1" fill="#2b7cd3"/><path d="M6 1q0-1 1-1h16q1 0 1 1v5H6z" fill="#41a5ee"/><path d="M6 16h18v5q0 1-1 1H7q-1 0-1-1z" fill="#103f91"/><rect y="5" width="12" height="12" rx="1" fill="#185abd"/><path d="M2 8l2 6 2-5 2 5 2-6" fill="none" stroke="#fff" stroke-width="1.500"/></svg></button>
      <button class="open" aria-label="Java"><svg width="24" height="24" viewBox="0 0 24 24"><rect width="24" height="24" rx="2" fill="#cfd3d6"/><path d="M9 1c4 1 6 5 7 9 3 1 4 0 7 0-1 4-3 5-6 5v5l-4 3-3-3-4 2-1-6c-2 0-4-1-4-4 3 1 5 0 6-2z" fill="#1b1b1b"/><path d="M9 12c3 2 5 2 7 0l1 7c-2 3-6 3-8 0z" fill="#f5f5f5"/><circle cx="13" cy="9" r="2.700" fill="#e3342b"/></svg></button>
      <div class="spacer"></div>
      <div class="weather"><svg width="24" height="24" viewBox="0 0 24 24"><circle cx="12" cy="12" r="10" fill="#f6952a"/><path d="M2 9a3 3 0 0 1 1-6c1-4 7-4 8 0 3 0 3 5 0 5z" fill="#bcd5f5"/><path d="M13 21c-3-1-2-5 1-5 1-4 6-3 6 0 5 0 5 5 2 5z" fill="#cfe0f8"/></svg><span>33°C</span><span>Parc. soleado</span></div>
      <div class="tray">
        <svg width="12" height="8"><path d="M1 7l5-5 5 5" fill="none" stroke="#fff" stroke-width="1.300"/></svg>
        <svg width="16" height="16"><circle cx="8" cy="8" r="8" fill="#e9d621"/><path d="M8 0a8 8 0 0 1 7 4L2 13A8 8 0 0 1 8 0z" fill="#3ea52f"/><circle cx="8" cy="8" r="5.500" fill="#f4e33a"/><path d="M8 4.500v7M4.500 8h7" stroke="#268129" stroke-width="2.500"/></svg>
        <svg width="16" height="14"><path d="M1 5h2l3-3v10L3 9H1z" fill="none" stroke="#fff"/><path d="M8 5q1.500 2 0 4M10 3q3 4 0 8" fill="none" stroke="#fff"/><path d="M12.500 1.500q4 5.500 0 11" fill="none" stroke="#8c96a5"/></svg>
        <svg width="12" height="16"><rect x="1" y="4.500" width="7" height="7" rx="1" fill="none" stroke="#fff"/><path d="M8 7l3-2v6L8 9M2 2q4-2 7 0M2 14q4 2 7 0" fill="none" stroke="#fff"/></svg>
        <svg width="14" height="14"><g fill="none"><path d="M1.500 12C1.500 6 6 1.500 12 1.500M4 12.500c0-5 3-8 8-8" stroke="#7b8798"/><path d="M6.500 13c0-3.500 2-5.500 5.500-5.500M9 13c0-2 1-3 3-3" stroke="#fff"/></g><circle cx="11.500" cy="12.500" r="1.500" fill="#fff"/></svg>
        <span>ESP</span>
      </div>
      <div class="clock">16:13<br>29/5/2024</div>
      <button class="notify" aria-label="Notificaciones"><svg width="17" height="16"><path d="M0 0h16v12H7l-3 3v-3H0z" fill="#fff"/><path d="M3 3.500h10M3 6h10M3 8.500h7" stroke="#1b2a45"/></svg><span>4</span></button>
    </footer>
  </body>
</html>
```
FILE: styles.css
```css
* {
  box-sizing: border-box;
}
body {
  margin: 0;
  height: 100vh;
  display: flex;
  flex-direction: column;
  overflow: hidden;
  font-family: Roboto, sans-serif;
  font-size: 14px;
  color: #2c363a;
  background: #fff;
}
button, input {
  font: inherit;
  color: inherit;
  border: none;
  background: none;
  padding: 0;
  margin: 0;
  outline: none;
}
button {
  display: flex;
  align-items: center;
  justify-content: center;
}
a {
  color: inherit;
  text-decoration: none;
}
ul {
  list-style: none;
  margin: 0;
  padding: 0;
}
svg {
  fill: currentColor;
  flex: none;
}
.sprite { position: absolute; width: 0; height: 0; }
.i12 { width: 12px; height: 12px; }
.i14 { width: 14px; height: 14px; }
.i16 { width: 16px; height: 16px; }
.i18 { width: 18px; height: 18px; }
.i20 { width: 20px; height: 18px; }
.spacer { flex: 1; }

/* browser */
.browser {
  font-family: "Open Sans", "Noto Sans", sans-serif;
  background: #d3e3fd;
}
.tabs {
  height: 40px;
  display: flex;
  align-items: center;
  font-size: 12px;
  color: #3f4a5a;
}
.tab-search {
  width: 28px;
  height: 28px;
  margin: 0 4px 0 6px;
  border-radius: 9px;
  background: #e9f0fe;
  color: #1f1f1f;
}
.tab {
  width: 238px;
  height: 34px;
  padding: 0 12px 0 10px;
  display: flex;
  align-items: center;
  background: linear-gradient(#a8c7fa, #a8c7fa) right center / 2px 16px no-repeat;
}
.tab.last {
  background: none;
}
.tab.active {
  width: 232px;
  margin-left: 2px;
  padding: 0 8px;
  align-self: flex-end;
  padding-bottom: 6px;
  background: #fff;
  border-radius: 10px 10px 0 0;
  color: #1f1f1f;
}
.tab-title {
  flex: 1;
  min-width: 0;
  margin-left: 8px;
  white-space: nowrap;
  -webkit-mask-image: linear-gradient(to right, #000 85%, rgba(0,0,0,0.1));
  mask-image: linear-gradient(to right, #000 85%, rgba(0,0,0,0.1));
}
.new-tab {
  width: 40px;
  height: 28px;
}
.win-btns {
  display: flex;
  margin-left: auto;
}
.win-btns button {
  width: 46px;
  height: 40px;
}
.nav {
  height: 47px;
  padding: 0 4px;
  display: flex;
  align-items: center;
  background: #fff;
  border-bottom: 1px solid #dcdfe3;
  border-radius: 8px 8px 0 0;
  color: #474747;
}
.nav-btn {
  width: 36px;
  height: 34px;
}
.nav-btn.off {
  color: #b4b4b4;
}
.omnibox {
  flex: 1;
  height: 34px;
  margin: 0 9px 0 8px;
  padding: 0 15px 0 5px;
  display: flex;
  align-items: center;
  gap: 8px;
  border-radius: 17px;
  background: #ebeef7;
}
.omnibox input {
  flex: 1;
  font-family: "Noto Sans", sans-serif;
  font-size: 13px;
  color: #3c4450;
}
.site {
  width: 24px;
  height: 24px;
  border-radius: 12px;
  background: #fff;
}
.nav-sep {
  width: 2px;
  height: 16px;
  margin: 0 8px;
  background: #d3e3fd;
}
.profile {
  width: 20px;
  height: 20px;
  line-height: 20px;
  border-radius: 10px;
  background: #8d6e63;
  color: #fff;
  font-size: 11px;
}
.menu-dots {
  width: 6px;
  height: 14px;
}

/* webmail */
.webmail {
  flex: 1;
  min-height: 0;
  display: flex;
}
.taskmenu {
  width: 78px;
  display: flex;
  flex-direction: column;
  background: #04173b;
  color: #fff;
  font-size: 13px;
  text-align: center;
}
.logo {
  width: 52px;
  height: 52px;
  margin: 4px 13px 2px;
}
.taskmenu a {
  height: 58px;
  padding-top: 10px;
}
.taskmenu span {
  display: block;
  line-height: 14px;
  padding: 1px 0;
  margin-top: 6px;
  overflow: hidden;
  text-overflow: ellipsis;
  white-space: nowrap;
}
.ti {
  display: block;
  width: 20px;
  height: 18px;
  margin: 0 auto;
}
.ti.wide {
  width: 24px;
}
.taskmenu .compose { color: #4cb8f5; }
.taskmenu .selected { background: #0c2866; }
.taskmenu .logout { color: #f4515f; }
.taskmenu .home {
  height: 62px;
}
.taskmenu .home span {
  padding: 0 12px;
  margin-top: 3px;
  white-space: normal;
}
.folders, .messages {
  display: flex;
  flex-direction: column;
  border-right: 1px solid #ced4da;
}
.folders {
  width: 236px;
}
.messages {
  width: 346px;
}
.content {
  flex: 1;
}
.head {
  height: 58px;
  display: flex;
  align-items: center;
  background: #f3f3f3;
  border-bottom: 1px solid #ced4da;
}
.foot {
  height: 35px;
  display: flex;
  align-items: center;
  border-top: 1px solid #ced4da;
}
.account {
  padding: 0 9px 0 21px;
  justify-content: space-between;
  font-weight: 700;
}
.user {
  width: 193px;
  overflow: hidden;
  text-overflow: ellipsis;
  white-space: nowrap;
}
.acc-dots {
  width: 6px;
  height: 18px;
}
.folder-list {
  flex: 1;
}
.folder-list li {
  height: 36px;
  padding: 0 7px 1px 9px;
  display: flex;
  align-items: center;
  gap: 7px;
  border-bottom: 1px solid #f1f3f4;
}
.folder-list a {
  flex: 1;
}
.folder-list .selected {
  background: #ebf7fd;
}
.fi {
  width: 21px;
  height: 18px;
}
.unread {
  font-weight: 700;
}
.badge {
  width: 28px;
  height: 19px;
  line-height: 19px;
  border-radius: 6px;
  background: #37beff;
  color: #fff;
  font-size: 13px;
  text-align: center;
}
.quota {
  padding-left: 27px;
  font-size: 12px;
  color: #6a6f73;
}
.disk {
  width: 21px;
  height: 18px;
}
.bar {
  width: 115px;
  height: 7px;
  margin: 0 14px 0 17px;
  border: 1px solid #d3d9dc;
  border-radius: 4px;
  overflow: hidden;
}
.used {
  display: block;
  height: 5px;
  background: #6fcaf8;
}
.toolbar {
  justify-content: center;
}
.toolbar button {
  flex-direction: column;
  gap: 7px;
  min-width: 42px;
  padding: 1px 6px 0;
  font-size: 13px;
  line-height: 14px;
}
.toolbar .off {
  color: #a0a6a9;
}
.toolbar .all {
  padding-right: 9px;
}
.toolbar .drop {
  width: 16px;
  min-width: 0;
  margin-left: -7px;
  padding: 0;
}
.drop svg, .attachments button svg {
  width: 9px;
  height: 6px;
}
.toolbar .group {
  margin-left: 14px;
}
.searchbar {
  height: 36px;
  padding: 0 6px 1px 11px;
  display: flex;
  align-items: center;
  background: #fbfbfb;
}
.mag {
  color: #737677;
}
.searchbar input {
  flex: 1;
  margin-left: 7px;
}
.searchbar input::placeholder {
  color: #737677;
}
.searchbar button {
  margin-left: 13px;
}
.list-wrap {
  flex: 1;
  min-height: 0;
  display: flex;
}
.list {
  flex: 1;
  overflow: hidden;
}
.list li {
  height: 54px;
  padding: 4px 8px 0 28px;
  display: grid;
  grid-template-columns: 1fr auto 26px;
  grid-template-rows: 18px 31px;
  align-items: center;
  border-bottom: 1px solid #f1f3f4;
}
.list .selected {
  background: #ebf7fd;
  box-shadow: inset 2px 0 #9fdcf9;
}
.from, .date {
  font-size: 13px;
  color: #737677;
}
.subject {
  grid-row: 2;
  grid-column: 1 / 3;
  margin-left: -14px;
  white-space: nowrap;
  overflow: hidden;
  text-overflow: ellipsis;
}
.subject::before {
  content: "";
  float: left;
  width: 6px;
  height: 6px;
  margin: 6px 8px 0 0;
  border-radius: 3px;
  background: #2c363a;
}
.clip {
  grid-row: 2;
  grid-column: 3;
  justify-self: end;
  width: 17px;
  height: 18px;
  color: #9a9d9e;
}
.scroll {
  width: 17px;
  display: flex;
  flex-direction: column;
  align-items: center;
  background: #f1f1f1;
  color: #b0b0b0;
}
.scroll svg {
  width: 7px;
  height: 5px;
  margin: 6px 0;
  transform: rotate(180deg);
}
.scroll .down {
  margin-top: auto;
  transform: none;
}
.thumb {
  width: 13px;
  height: 90px;
  background: #c1c1c1;
}
.pager {
  padding: 0 7px;
}
.pager .off {
  color: #8f9597;
}
.pager button:nth-child(2) {
  margin-left: 13px;
}
.pager button:last-child {
  margin-left: 12px;
}
.count {
  flex: 1;
  text-align: center;
  font-size: 11px;
  font-weight: 700;
  color: #737677;
}
.pager input {
  width: 42px;
  height: 22px;
  margin-right: 9px;
  border: 1px solid #ced4da;
  border-radius: 4px;
  text-align: center;
  font-size: 13px;
}

/* message preview */
.message {
  padding: 13px 14px;
}
.message h2 {
  margin: 0;
  font-size: 21px;
  line-height: 28px;
  font-weight: 700;
}
.message h2 a {
  margin-left: 2px;
}
.msg-head {
  display: flex;
  gap: 15px;
  margin-top: 5px;
}
.photo {
  width: 56px;
  height: 56px;
}
.headers {
  border-collapse: collapse;
  line-height: 23px;
}
.headers th, .headers td {
  padding: 0 15px 0 0;
  text-align: left;
}
.headers th {
  color: #737677;
}
.headers a, .msg-links {
  color: #1f96e8;
}
.msg-links {
  display: flex;
  gap: 11px;
  margin-top: 7px;
  font-size: 13px;
}
.msg-links a {
  display: flex;
  gap: 5px;
  line-height: 16px;
}
.msg-links svg {
  color: #00a0f5;
  margin-top: 1px;
}
.attachments {
  display: flex;
  flex-wrap: wrap;
  margin-top: 17px;
  padding-left: 7px;
  border: 1px solid #f1f3f4;
  background: #fbfbfb;
}
.attachments li {
  height: 28px;
  margin-right: 14px;
  display: flex;
  align-items: center;
}
.attachments span {
  color: #737677;
}
.attachments button {
  width: 9px;
  margin-left: 7px;
  color: #00a0f5;
}
.pdf {
  width: 14px;
  height: 18px;
  margin-right: 6px;
}
.body-text {
  margin: 22px 0 0;
  font-family: "DejaVu Sans Mono", monospace;
  font-size: 12px;
  line-height: 19px;
}

/* taskbar */
.taskbar {
  height: 40px;
  display: flex;
  align-items: center;
  font-family: "Open Sans", "Noto Sans", sans-serif;
  font-size: 12px;
  color: #fff;
  background: linear-gradient(to right, #20353f, #20353f 60%, #1b2a45 80%);
}
.taskbar > button {
  width: 49px;
  height: 40px;
}
.taskbar .open {
  background: linear-gradient(#76b9ed, #76b9ed) center bottom / 40px 2px no-repeat;
}
.taskbar .current {
  background: #4d6068;
  border-bottom: 2px solid #76b9ed;
  padding-top: 2px;
}
.weather {
  display: flex;
  align-items: center;
  gap: 8px;
  font-size: 13px;
}
.tray {
  display: flex;
  align-items: center;
  gap: 10px;
  margin-left: 25px;
}
.clock {
  margin-left: 14px;
  line-height: 19px;
  text-align: center;
}
.taskbar .notify {
  position: relative;
  margin-left: 3px;
  margin-right: 4px;
  padding-right: 8px;
  border-right: 1px solid #4f5b70;
}
.notify span {
  position: absolute;
  right: 12px;
  bottom: 4px;
  width: 16px;
  height: 16px;
  line-height: 14px;
  border: 1px solid #7c8592;
  border-radius: 8px;
  background: #2b3440;
  font-size: 11px;
}
```
